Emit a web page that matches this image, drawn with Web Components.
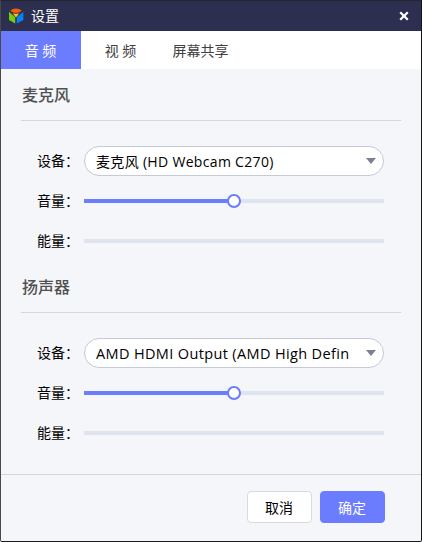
<!DOCTYPE html>
<html lang="zh-CN">
<head>
<meta charset="utf-8">
<title>设置</title>
<style>
html, body { margin: 0; }
body { width: 422px; height: 542px; overflow: hidden; font: 14px/20px "Open Sans", "Noto Sans CJK SC", sans-serif; color: #000; }
</style>
</head>
<body>
<settings-window heading="设置">
  <tab-item slot="tabs" active style="width:80px">音 频</tab-item>
  <tab-item slot="tabs" style="width:80px">视 频</tab-item>
  <tab-item slot="tabs" style="width:80px">屏幕共享</tab-item>
  <setting-section heading="麦克风">
    <setting-row label="设备："><select-box style="--track:0.32px">麦克风 (HD Webcam C270)</select-box></setting-row>
    <setting-row label="音量："><range-bar value="50"></range-bar></setting-row>
    <setting-row label="能量："><range-bar></range-bar></setting-row>
  </setting-section>
  <setting-section heading="扬声器">
    <setting-row label="设备："><select-box style="--track:0.36px;--size:14.5px">AMD HDMI Output (AMD High Defin</select-box></setting-row>
    <setting-row label="音量："><range-bar value="50"></range-bar></setting-row>
    <setting-row label="能量："><range-bar></range-bar></setting-row>
  </setting-section>
  <push-button slot="actions">取消</push-button>
  <push-button slot="actions" primary>确定</push-button>
</settings-window>
<script>
function define(name, render) {
  customElements.define(name, class extends HTMLElement {
    connectedCallback() {
      if (this.shadowRoot) return;
      this.attachShadow({ mode: 'open' }).innerHTML = render(this);
    }
  });
}

define('app-logo', () => `
<style>:host{display:block;width:16px;height:16px}svg{display:block}</style>
<svg width="16" height="16" viewBox="0 0 16 16">
  <path d="M2.2 2.8Q5 0.6 8 0.6T13.8 2.8Q11 5 8 5T2.2 2.8Z" fill="#ff5a0a"/>
  <path d="M4.6 5.2Q8 6.4 11.4 5.2L8 9.6Z" fill="#ffc21a"/>
  <path d="M1 3.8L7.2 9.2V15.4L1 12Z" fill="#73cf0c"/>
  <path d="M15.4 3.8L8.8 9.2V15.4L15.4 12Z" fill="#0782f5"/>
</svg>`);

define('settings-window', el => `
<style>
:host{display:flex;flex-direction:column;box-sizing:border-box;width:422px;height:542px;border:1px solid;border-color:#25272b #141414 #181818 #484848;border-radius:0 0 2px 2px;background:#f4f6f9}
header{display:flex;align-items:center;height:30px;padding:0 12px 0 7px;background:#2d2f50;color:#fff}
.title{margin-left:7px;flex:1}
nav{display:flex;height:38px;background:#fff}
main{flex:1;padding:0 20px}
footer{display:flex;justify-content:flex-end;gap:8px;height:67px;box-sizing:border-box;padding:16px 36px 0 0;border-top:1px solid #d4d6da}
</style>
<header><app-logo></app-logo><span class="title">${el.getAttribute('heading')}</span>
<svg width="10" height="10" viewBox="0 0 10 10"><path d="M1.2 1.2l7.6 7.6M8.8 1.2l-7.6 7.6" stroke="#fff" stroke-width="2.3"/></svg></header>
<nav><slot name="tabs"></slot></nav>
<main><slot></slot></main>
<footer><slot name="actions"></slot></footer>`);

define('tab-item', () => `
<style>
:host{display:flex;align-items:center;justify-content:center;color:#404040;padding:1px 1px 0 0;box-sizing:border-box}
:host([active]){background:#6b7cff;color:#fff}
</style><slot></slot>`);

define('setting-section', el => `
<style>
:host{display:block;height:192px}
h2{margin:0;box-sizing:border-box;height:52px;padding:14px 0 0 1px;border-bottom:1px solid #d4d6da;font-size:16px;line-height:24px;font-weight:500;color:#505050}
.rows{padding-top:20px}
</style>
<h2>${el.getAttribute('heading')}</h2><div class="rows"><slot></slot></div>`);

define('setting-row', el => `
<style>
:host{display:flex;align-items:center;height:40px}
label{width:47px;padding-left:16px;white-space:nowrap}
</style>
<label>${el.getAttribute('label')}</label><slot></slot>`);

define('select-box', () => `
<style>
:host{display:flex;align-items:center;box-sizing:border-box;width:300px;height:30px;padding:0 7px 0 11px;border:1px solid #c5c9d8;border-radius:15px;background:#fff}
span{flex:1;padding-top:1px;white-space:nowrap;overflow:hidden;font-size:var(--size,14px);letter-spacing:var(--track,0)}
</style>
<span><slot></slot></span><svg width="10" height="6" viewBox="0 0 10 6"><path d="M0 0h10L5 6z" fill="#7c8092"/></svg>`);

define('range-bar', el => {
  const value = el.getAttribute('value');
  return `
<style>
:host{display:flex;align-items:center;width:300px;height:14px}
.track{flex:1;height:4px;background:#dfe3ee}
.fill{display:flex;align-items:center;justify-content:flex-end;height:4px;background:#6b7cff}
.knob{flex:none;box-sizing:border-box;width:14px;height:14px;margin-right:-7px;border:2px solid #6b7cff;border-radius:50%;background:#fff}
</style>
<div class="track">${value ? `<div class="fill" style="width:${value}%"><div class="knob"></div></div>` : ''}</div>`;
});

define('push-button', () => `
<style>
:host{display:flex;align-items:center;justify-content:center;box-sizing:border-box;width:65px;height:32px;border:1px solid #d8dadd;border-radius:4px;background:#fff;padding:1px 1px 0 0}
:host([primary]){background:#6b7cff;border-color:#6b7cff;color:#fff}
</style><slot></slot>`);
</script>
</body>
</html>
